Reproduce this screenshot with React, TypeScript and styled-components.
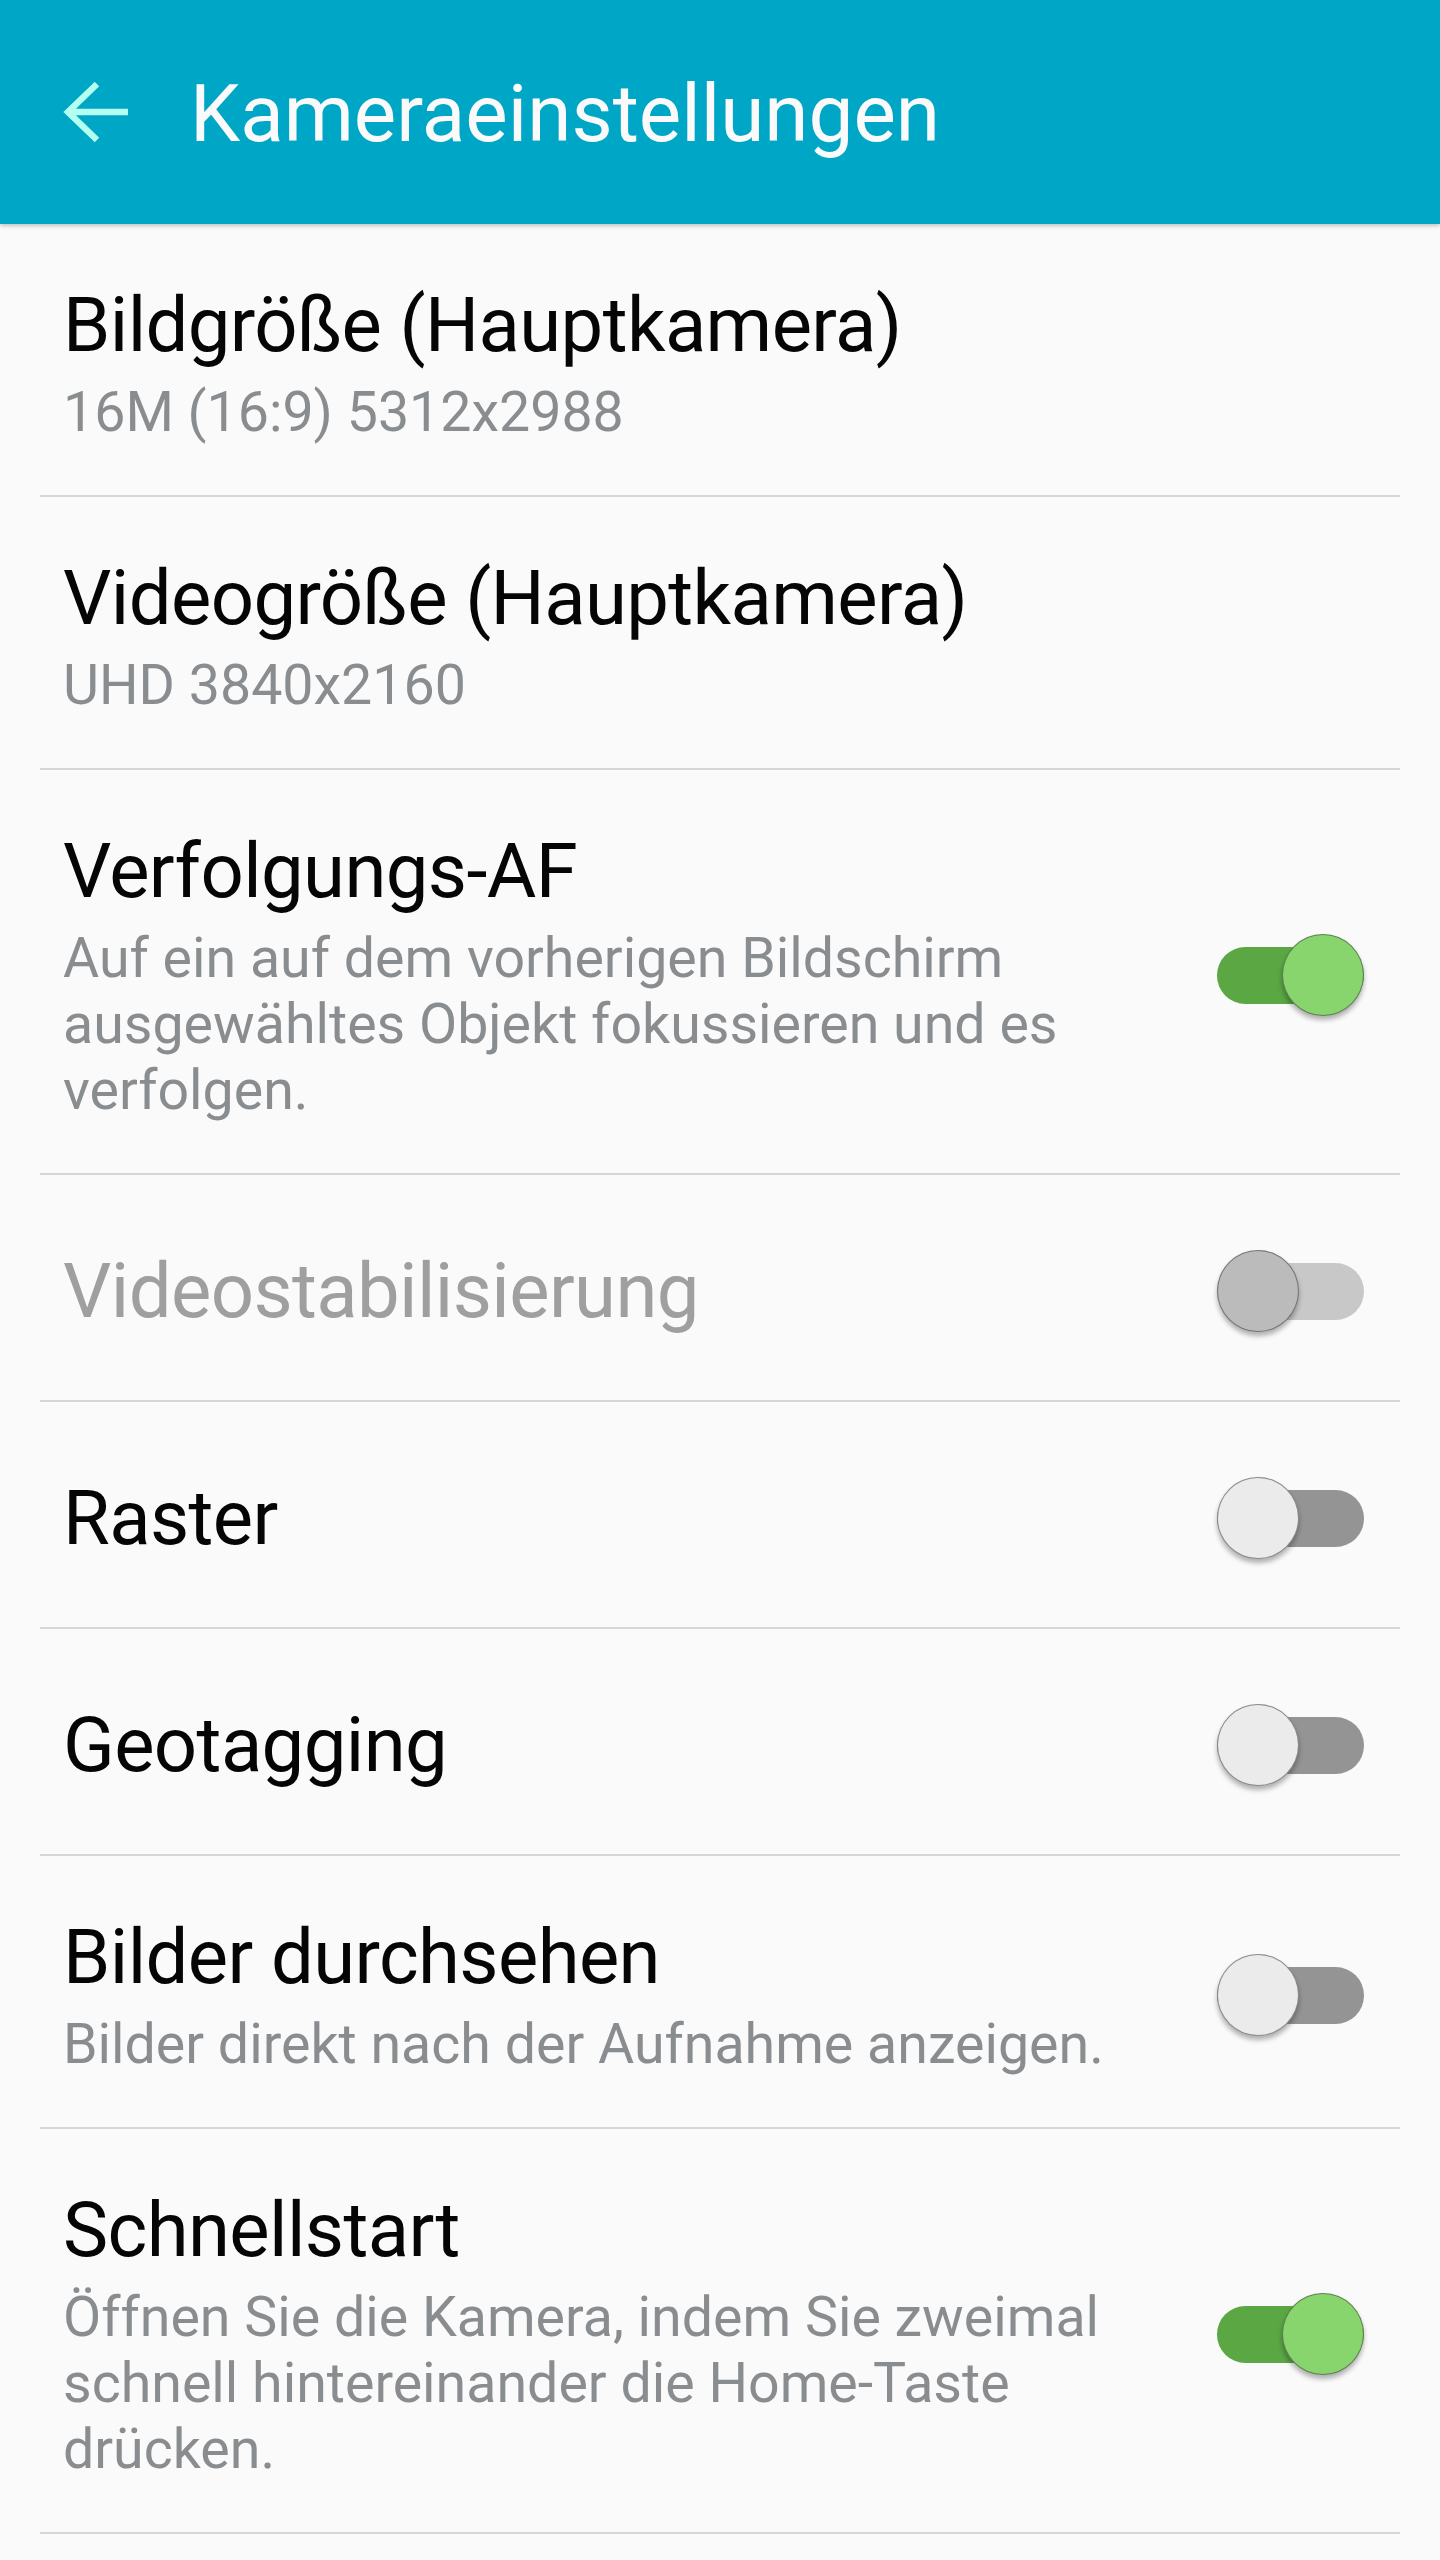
import React from "react";
import styled, { createGlobalStyle } from "styled-components";

const GlobalStyle = createGlobalStyle`
  html, body {
    margin: 0;
    padding: 0;
    background: #fafafa;
  }
  body {
    font-family: Roboto, "Noto Sans", "Liberation Sans", sans-serif;
    -webkit-font-smoothing: antialiased;
  }
`;

const Page = styled.div`
  width: 1440px;
  min-height: 2560px;
  background: #fafafa;
`;

const Header = styled.header`
  position: relative;
  z-index: 1;
  height: 224px;
  background: #00a6c5;
  display: flex;
  align-items: center;
  padding-left: 63px;
  box-sizing: border-box;
  box-shadow: 0 2px 4px rgba(0, 0, 0, 0.22);
`;

const BackButton = styled.button`
  border: 0;
  background: transparent;
  padding: 0;
  margin: 0;
  width: 66px;
  height: 66px;
  display: flex;
  cursor: pointer;
`;

const HeaderTitle = styled.h1`
  margin: 0 0 0 61px;
  font-size: 80px;
  line-height: 94px;
  font-weight: 400;
  color: #fafafa;
  transform: translateY(2px);
`;

const List = styled.div`
  margin: 0 40px;
`;

const Row = styled.div`
  display: flex;
  align-items: center;
  box-sizing: border-box;
  min-height: 227px;
  padding: 56px 36px 49px 23px;
  border-bottom: 2px solid #d6d6d6;
`;

const TextCol = styled.div`
  flex: 1;
  min-width: 0;
  padding-right: 50px;
`;

const Title = styled.div<{ $disabled?: boolean }>`
  font-size: 76px;
  line-height: 90px;
  color: ${(p) => (p.$disabled ? "#9f9f9f" : "#050505")};
  letter-spacing: -0.6px;
`;

const Subtitle = styled.div`
  margin-top: 10px;
  font-size: 55.5px;
  line-height: 66px;
  color: #8a8d90;
`;

type SwitchState = "on" | "off" | "disabled";

const trackColor: Record<SwitchState, string> = {
  on: "#5aa744",
  off: "#949494",
  disabled: "#c8c8c8",
};

const knobColor: Record<SwitchState, string> = {
  on: "#88d56d",
  off: "#ebebeb",
  disabled: "#bbbbbb",
};

const SwitchWrap = styled.div`
  position: relative;
  flex: none;
  width: 147px;
  height: 83px;
  display: flex;
  align-items: center;
`;

const Track = styled.div<{ $state: SwitchState }>`
  width: 147px;
  height: 57px;
  border-radius: 29px;
  background: ${(p) => trackColor[p.$state]};
`;

const Knob = styled.div<{ $state: SwitchState }>`
  position: absolute;
  top: 0;
  ${(p) => (p.$state === "on" ? "right: 0;" : "left: 0;")}
  width: 82px;
  height: 82px;
  box-sizing: border-box;
  border-radius: 50%;
  background: ${(p) => knobColor[p.$state]};
  border: 1px solid rgba(60, 60, 60, 0.55);
  box-shadow: 0 4px 5px rgba(0, 0, 0, 0.3);
`;

const Switch: React.FC<{ state: SwitchState }> = ({ state }) => (
  <SwitchWrap>
    <Track $state={state} />
    <Knob $state={state} />
  </SwitchWrap>
);

const BackArrow = () => (
  <svg width="66" height="66" viewBox="0 0 66 66" fill="none">
    <path
      d="M34 5 L5 33 L34 61 M5 33 L65 33"
      stroke="#b3fff1"
      strokeWidth="6.5"
      strokeLinecap="butt"
      strokeLinejoin="miter"
    />
  </svg>
);

type Item = {
  title: string;
  subtitle?: string;
  toggle?: SwitchState;
  disabled?: boolean;
};

const items: Item[] = [
  { title: "Bildgröße (Hauptkamera)", subtitle: "16M (16:9) 5312x2988" },
  { title: "Videogröße (Hauptkamera)", subtitle: "UHD 3840x2160" },
  {
    title: "Verfolgungs-AF",
    subtitle:
      "Auf ein auf dem vorherigen Bildschirm ausgewähltes Objekt fokussieren und es verfolgen.",
    toggle: "on",
  },
  { title: "Videostabilisierung", toggle: "disabled", disabled: true },
  { title: "Raster", toggle: "off" },
  { title: "Geotagging", toggle: "off" },
  {
    title: "Bilder durchsehen",
    subtitle: "Bilder direkt nach der Aufnahme anzeigen.",
    toggle: "off",
  },
  {
    title: "Schnellstart",
    subtitle:
      "Öffnen Sie die Kamera, indem Sie zweimal schnell hintereinander die Home-Taste drücken.",
    toggle: "on",
  },
];

export default function App() {
  return (
    <Page>
      <GlobalStyle />
      <Header>
        <BackButton aria-label="Zurück">
          <BackArrow />
        </BackButton>
        <HeaderTitle>Kameraeinstellungen</HeaderTitle>
      </Header>
      <List>
        {items.map((it) => (
          <Row key={it.title}>
            <TextCol>
              <Title $disabled={it.disabled}>{it.title}</Title>
              {it.subtitle && <Subtitle>{it.subtitle}</Subtitle>}
            </TextCol>
            {it.toggle && <Switch state={it.toggle} />}
          </Row>
        ))}
      </List>
    </Page>
  );
}
